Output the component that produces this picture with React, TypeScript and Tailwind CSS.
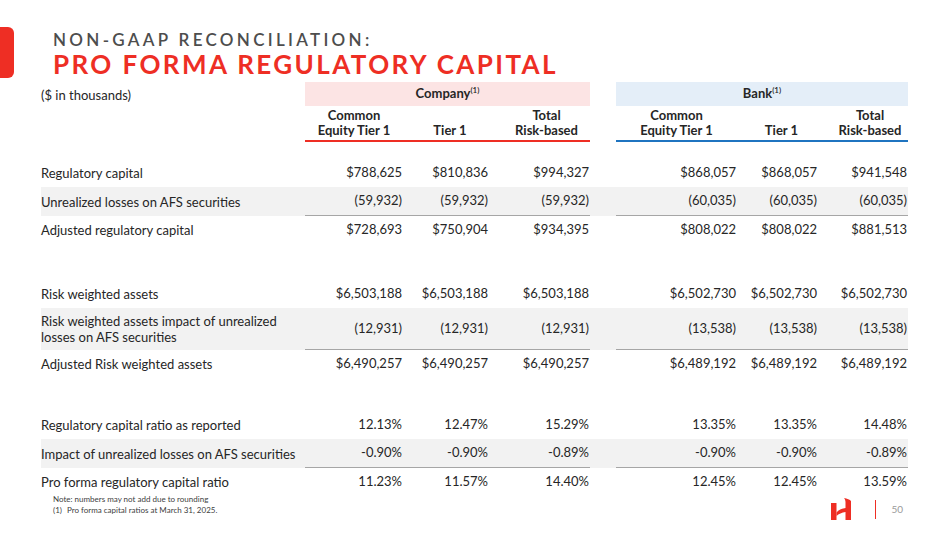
import React from 'react'

const cols = 'grid w-[867px] grid-cols-[264px_98px_86px_101px_26px_121px_81px_90px]'

type Row = { label: React.ReactNode; company: string[]; bank: string[]; shade?: boolean; tall?: boolean }

const groups: Row[][] = [
  [
    { label: 'Regulatory capital', company: ['$788,625', '$810,836', '$994,327'], bank: ['$868,057', '$868,057', '$941,548'] },
    { label: 'Unrealized losses on AFS securities', company: ['(59,932)', '(59,932)', '(59,932)'], bank: ['(60,035)', '(60,035)', '(60,035)'], shade: true },
    { label: 'Adjusted regulatory capital', company: ['$728,693', '$750,904', '$934,395'], bank: ['$808,022', '$808,022', '$881,513'] },
  ],
  [
    { label: 'Risk weighted assets', company: ['$6,503,188', '$6,503,188', '$6,503,188'], bank: ['$6,502,730', '$6,502,730', '$6,502,730'] },
    {
      label: (
        <>
          Risk weighted assets impact of unrealized
          <br />
          losses on AFS securities
        </>
      ),
      company: ['(12,931)', '(12,931)', '(12,931)'],
      bank: ['(13,538)', '(13,538)', '(13,538)'],
      shade: true,
      tall: true,
    },
    { label: 'Adjusted Risk weighted assets', company: ['$6,490,257', '$6,490,257', '$6,490,257'], bank: ['$6,489,192', '$6,489,192', '$6,489,192'] },
  ],
  [
    { label: 'Regulatory capital ratio as reported', company: ['12.13%', '12.47%', '15.29%'], bank: ['13.35%', '13.35%', '14.48%'] },
    { label: 'Impact of unrealized losses on AFS securities', company: ['-0.90%', '-0.90%', '-0.89%'], bank: ['-0.90%', '-0.90%', '-0.89%'], shade: true },
    { label: 'Pro forma regulatory capital ratio', company: ['11.23%', '11.57%', '14.40%'], bank: ['12.45%', '12.45%', '13.59%'] },
  ],
]

const DataRow = ({ row }: { row: Row }) => {
  const h = row.tall ? 'h-[42px]' : row.shade ? 'h-[29px]' : 'h-[28px]'
  const line = row.shade ? 'border-b border-[#a6a6a6]' : ''
  return (
    <div className={`${cols} ${h} ${row.shade ? 'bg-[#f2f2f2]' : ''}`}>
      <div className="flex items-center leading-[16px]">{row.label}</div>
      {row.company.map((v, i) => (
        <div key={'c' + i} className={`flex items-center justify-end pr-[1px] ${line}`}>{v}</div>
      ))}
      <div />
      {row.bank.map((v, i) => (
        <div key={'b' + i} className={`flex items-center justify-end pr-[1px] ${line}`}>{v}</div>
      ))}
    </div>
  )
}

const HeaderCols = () => (
  <>
    <div className="text-center">Common<br />Equity Tier 1</div>
    <div className="flex flex-col justify-end text-center pl-2">Tier 1</div>
    <div className="text-center pl-[14px]">Total<br />Risk-based</div>
  </>
)

export default function App() {
  return (
    <div className="w-[949px] h-[534px] bg-white overflow-hidden text-[#262626] font-['Lato',sans-serif]">
      <div className="flex pt-[27px]">
        <div className="w-[14px] h-[51px] bg-[#ee2e24] rounded-r-[6px]" />
        <div className="ml-[39px] pt-[3px]">
          <div className="text-[17px] leading-[20px] font-semibold tracking-[3.3px] text-[#4d4d4d]">NON-GAAP RECONCILIATION:</div>
          <div className="text-[26px] leading-[28px] font-bold tracking-[2.4px] text-[#ee2e24]">PRO FORMA REGULATORY CAPITAL</div>
        </div>
      </div>

      <div className="ml-[41px] mt-[4px] text-[13px]">
        <div className={`${cols} h-[21px]`}>
          <div className="flex items-center pt-[4px]">($ in thousands)</div>
          <div className="col-span-3 bg-[#fce4e4] flex items-center justify-center font-bold">
            Company<sup className="text-[8px] font-semibold -top-[4px]">(1)</sup>
          </div>
          <div />
          <div className="col-span-3 bg-[#e4eef8] flex items-center justify-center font-bold">
            Bank<sup className="text-[8px] font-semibold -top-[4px]">(1)</sup>
          </div>
        </div>
        <div className={`${cols} font-bold leading-[15px]`}>
          <div />
          <div className="col-span-3 grid grid-cols-[98px_86px_101px] pt-[5px] pb-[2px] border-b-2 border-[#ee2e24]">
            <HeaderCols />
          </div>
          <div />
          <div className="col-span-3 grid grid-cols-[121px_81px_90px] pt-[5px] pb-[2px] border-b-2 border-[#1f74c0]">
            <HeaderCols />
          </div>
        </div>

        <div className="mt-[17px]">
          {groups[0].map((r, i) => <DataRow key={i} row={r} />)}
        </div>
        <div className="mt-[36px]">
          {groups[1].map((r, i) => <DataRow key={i} row={r} />)}
        </div>
        <div className="mt-[33px]">
          {groups[2].map((r, i) => <DataRow key={i} row={r} />)}
        </div>
      </div>

      <div className="flex items-start -mt-[2px]">
        <div className="ml-[53px] text-[8px] leading-[11px] text-[#404040]">
          <div>Note: numbers may not add due to rounding</div>
          <div className="flex">
            <span className="w-[14px]">(1)</span>
            <span>Pro forma capital ratios at March 31, 2025.</span>
          </div>
        </div>
        <div className="ml-auto mr-[46px] mt-[4px] flex items-center">
          <svg width="20" height="22" viewBox="0 0 20 22">
            <path d="M0 5h5.5v17H0z" fill="#ee2e24" />
            <path
              d="M13 0C16 0.5 19 1.5 20 3V22H14.5V14C11 14.5 7.5 16 5.5 18V14.5C7.5 12 10.5 10.5 14.5 10V4C14.5 2.5 13.8 1 13 0Z"
              fill="#ee2e24"
            />
          </svg>
          <div className="ml-[24px] w-px h-[19px] bg-[#ee2e24]" />
          <div className="ml-[15px] text-[10px] text-[#9a9a9a]">50</div>
        </div>
      </div>
    </div>
  )
}
